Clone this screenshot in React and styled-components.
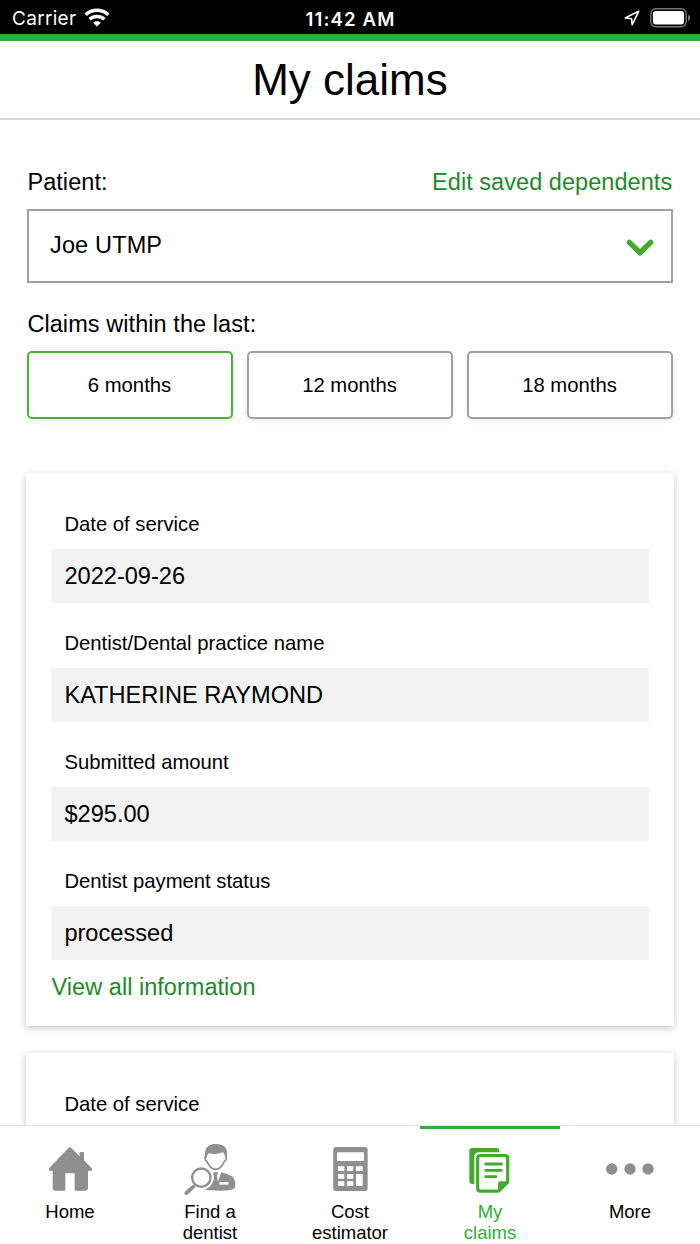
import React from "react";
import styled, { createGlobalStyle } from "styled-components";

const GlobalStyle = createGlobalStyle`
  * { box-sizing: border-box; }
  body {
    margin: 0;
    background: #fff;
    color: #000;
    font-family: "Liberation Sans", Arial, Helvetica, sans-serif;
  }
  button { font-family: inherit; color: inherit; }
`;

const Screen = styled.div`
  display: flex;
  flex-direction: column;
  width: 700px;
  height: 1244px;
  overflow: hidden;
`;

const StatusBar = styled.div`
  display: grid;
  grid-template-columns: 1fr auto 1fr;
  align-items: center;
  flex: none;
  height: 34px;
  padding: 0 9px 0 12px;
  background: #000;
  color: #fff;
  font-family: Inter, Roboto, sans-serif;
  font-size: 19px;
  line-height: 34px;
`;

const Carrier = styled.div`
  display: flex;
  align-items: center;
  gap: 8px;
  letter-spacing: 0.3px;
  padding-top: 2px;

  svg { margin-bottom: 4px; }
`;

const Clock = styled.div`
  font-weight: 600;
  font-size: 18.6px;
  font-feature-settings: "calt" 0;
  letter-spacing: 1.15px;
  padding: 1px 2px 0 0;
`;

const StatusIcons = styled.div`
  display: flex;
  align-items: center;
  justify-content: flex-end;
  gap: 10px;
`;

const Header = styled.header`
  display: flex;
  align-items: center;
  justify-content: center;
  flex: none;
  height: 86px;
  border-top: 7px solid #2fae38;
  border-bottom: 2px solid #d8d8d8;
`;

const Title = styled.h1`
  margin: 0;
  font-size: 44px;
  font-weight: 400;
  line-height: 50px;
`;

const Main = styled.main`
  flex: 1;
  min-height: 0;
  overflow: hidden;
  padding: 48px 27px 0;
`;

const LabelRow = styled.div`
  display: flex;
  justify-content: space-between;
  height: 27px;
  margin-bottom: 14px;
  padding: 0 0.8px 0 0.4px;
  font-size: 23.5px;
  line-height: 29px;
`;

const Caption = styled.span`
  letter-spacing: 0.07px;
`;

const EditLink = styled.a`
  color: #1a8c27;
  letter-spacing: 0.05px;
`;

const Select = styled.div`
  display: flex;
  align-items: center;
  justify-content: space-between;
  height: 74px;
  margin-bottom: 27px;
  padding: 0 17.5px 2px 21px;
  border: 2px solid #a0a0a0;
  font-size: 23.5px;
  letter-spacing: 0.15px;

  svg { margin-top: 6px; }
`;

const Periods = styled.div`
  display: grid;
  grid-template-columns: repeat(3, 1fr);
  gap: 14px;
  margin-bottom: 54px;
`;

const Period = styled.button`
  height: 68px;
  padding: 0 1px 0 0;
  border: 2px solid ${(p) => (p.$active ? "#49b133" : "#a0a0a0")};
  border-radius: 5px;
  background: #fff;
  box-shadow: 0 2px 6px ${(p) => (p.$active ? "rgba(66,174,43,.16)" : "rgba(0,0,0,.09)")};
  font-size: 20.3px;
`;

const Card = styled.section`
  margin: 0 -1px 27px;
  padding: 25px 25px 12px;
  background: #fff;
  box-shadow: 0 2px 7px rgba(0, 0, 0, 0.24);
`;

const Field = styled.div`
  & + & { margin-top: 14px; }
`;

const FieldLabel = styled.div`
  height: 51px;
  padding-left: 13.4px;
  font-size: 20.25px;
  line-height: 53px;
`;

const FieldValue = styled.div`
  height: 54px;
  padding-left: 13.4px;
  background: #f2f2f2;
  font-size: 23.6px;
  line-height: 54px;
`;

const ViewLink = styled.a`
  display: block;
  height: 54px;
  padding-left: 0.6px;
  color: #1a8c27;
  font-size: 23.5px;
  letter-spacing: 0.03px;
  line-height: 54px;
`;

const Nav = styled.nav`
  display: grid;
  grid-template-columns: repeat(5, 1fr);
  flex: none;
  height: 119px;
  border-top: 1px solid #e6e6e6;
  background: #fff;
`;

const NavItem = styled.a`
  display: flex;
  flex-direction: column;
  align-items: center;
  padding-top: 14px;
  border-top: 3px solid ${(p) => (p.$active ? "#2fae38" : "transparent")};
  color: ${(p) => (p.$active ? "#2fae38" : "#000")};
  font-size: 18.5px;
  line-height: 21px;
  text-align: center;
`;

const NavLabel = styled.span`
  margin-top: 6px;
  white-space: pre-line;
`;

const WifiIcon = () => (
  <svg width="26" height="19" viewBox="0 0 26 19">
    <g fill="none" stroke="#fff" strokeWidth="3.5">
      <path d="M1.6 6.8C8 .8 18 .8 24.4 6.8" />
      <path d="M5.6 11.3c4.2-3.8 10.6-3.8 14.8 0" />
    </g>
    <path fill="#fff" d="M9.2 14.7c2.1-1.9 5.5-1.9 7.6 0L13 18.6z" />
  </svg>
);

const LocationIcon = () => (
  <svg width="16" height="16" viewBox="0 0 16 16" fill="none" stroke="#fff" strokeWidth="1.6" strokeLinejoin="round">
    <path d="M14.8 1.2 1.2 7.9l6.3.8.7 6z" />
  </svg>
);

const BatteryIcon = () => (
  <svg width="41" height="20" viewBox="0 0 41 20">
    <rect x=".8" y=".8" width="35.4" height="17.9" rx="5" fill="none" stroke="#777" strokeWidth="1.4" />
    <rect x="2.9" y="3" width="31.2" height="13.5" rx="3" fill="#fff" />
    <path d="M38 6.7c2.9.8 2.9 5.4 0 6.2z" fill="#777" />
  </svg>
);

const ChevronIcon = () => (
  <svg width="28" height="18" viewBox="0 0 28 18">
    <path d="M3.4 3.4 14 13.8 24.6 3.4" fill="none" stroke="#42ab2a" strokeWidth="5.4" strokeLinecap="round" strokeLinejoin="round" />
  </svg>
);

const HomeIcon = () => (
  <svg width="50" height="52" viewBox="135 99 150 156" fill="#8f8f8f">
    <path d="M206 113q3-4 7 0l26 26v-9q0-4 4-4h5q4 0 4 4v21l22 22q3 3 2 7-2 4-6 2h-6v51q0 9-9 9h-31v-52h-28v52h-29q-9 0-9-9v-51h-5q-4 2-6-1-2-4 1-7z" />
  </svg>
);

const DentistIcon = () => (
  <svg width="52" height="52" viewBox="552 99 156 156">
    <path fill="#8f8f8f" d="M616 145c-4-22 3-38 20-42 14-3 31-1 39 8 7 8 8 21 4 34l-4-6c-2-7-3-10-7-12-13 5-27 6-40 3-7 3-7 9-8 13z" />
    <path fill="none" stroke="#8f8f8f" strokeWidth="5" strokeLinejoin="round" d="M619 137c-7 2-4 15 2 17 5 12 15 24 26 24s21-12 26-24c6-2 9-15 2-17" />
    <path fill="#8f8f8f" d="M639 187h16l-4 10 2 18 11-28c22 6 34 11 38 19 4 7 5 17 3 27-6 7-27 9-47 9-18 0-33 0-44-4 18-5 27-21 28-38z" />
    <path fill="#fff" d="M658 216h27v8h-27z" />
    <circle cx="604" cy="203" r="27.5" fill="#fff" stroke="#8f8f8f" strokeWidth="7" />
    <path d="M580 230 559 249" fill="none" stroke="#8f8f8f" strokeWidth="11.5" strokeLinecap="round" />
  </svg>
);

const CalculatorIcon = () => (
  <svg width="50" height="52" viewBox="135 99 150 156">
    <rect x="159.5" y="111" width="103.5" height="132" rx="9" fill="#8f8f8f" />
    <g fill="#fff">
      <rect x="171" y="127" width="81" height="26" rx="3" />
      <path d="M174 169h19v14h-19zM201 169h19v14h-19zM228 169h20v14h-20zM174 192h19v14h-19zM201 192h19v14h-19zM228 192h20v36h-20zM174 214h19v14h-19zM201 214h19v14h-19z" />
    </g>
  </svg>
);

const ClaimsIcon = () => (
  <svg width="52" height="52" viewBox="552 99 156 156">
    <path fill="#42ab2a" d="M577 114h72q9 0 9 9v4h-60q-15 0-15 15v80h-6q-9 0-9-9v-90q0-9 9-9z" />
    <path fill="#fff" stroke="#42ab2a" strokeWidth="9.5" strokeLinejoin="round" d="M601 136.5h74q8 0 8 8v72l-27 27h-55q-8 0-8-8v-91q0-8 8-8z" />
    <path fill="#42ab2a" d="M654 247v-26q0-7 7-7h26z" />
    <path stroke="#42ab2a" strokeWidth="8.5" strokeLinecap="round" d="M617 162h47M617 181h47M617 200h31" />
  </svg>
);

const MoreIcon = () => (
  <svg width="52" height="52" viewBox="0 0 52 52" fill="#8f8f8f">
    <circle cx="7.7" cy="26" r="5.7" />
    <circle cx="26" cy="26" r="5.7" />
    <circle cx="44" cy="26" r="5.7" />
  </svg>
);

const periods = ["6 months", "12 months", "18 months"];

const claims = [
  {
    fields: [
      ["Date of service", "2022-09-26"],
      ["Dentist/Dental practice name", "KATHERINE RAYMOND"],
      ["Submitted amount", "$295.00"],
      ["Dentist payment status", "processed"],
    ],
  },
  { fields: [["Date of service", ""]] },
];

const tabs = [
  { label: "Home", Icon: HomeIcon },
  { label: "Find a\ndentist", Icon: DentistIcon },
  { label: "Cost\nestimator", Icon: CalculatorIcon },
  { label: "My\nclaims", Icon: ClaimsIcon, active: true },
  { label: "More", Icon: MoreIcon },
];

export default function App() {
  return (
    <>
      <GlobalStyle />
      <Screen>
        <StatusBar>
          <Carrier>Carrier<WifiIcon /></Carrier>
          <Clock>11:42 AM</Clock>
          <StatusIcons><LocationIcon /><BatteryIcon /></StatusIcons>
        </StatusBar>
        <Header><Title>My claims</Title></Header>
        <Main>
          <LabelRow>
            <Caption>Patient:</Caption>
            <EditLink>Edit saved dependents</EditLink>
          </LabelRow>
          <Select>Joe UTMP<ChevronIcon /></Select>
          <LabelRow><Caption>Claims within the last:</Caption></LabelRow>
          <Periods>
            {periods.map((p, i) => <Period key={p} $active={i === 0}>{p}</Period>)}
          </Periods>
          {claims.map((claim, i) => (
            <Card key={i}>
              {claim.fields.map(([label, value]) => (
                <Field key={label}>
                  <FieldLabel>{label}</FieldLabel>
                  <FieldValue>{value}</FieldValue>
                </Field>
              ))}
              {i === 0 && <ViewLink>View all information</ViewLink>}
            </Card>
          ))}
        </Main>
        <Nav>
          {tabs.map(({ label, Icon, active }) => (
            <NavItem key={label} $active={active}>
              <Icon />
              <NavLabel>{label}</NavLabel>
            </NavItem>
          ))}
        </Nav>
      </Screen>
    </>
  );
}
